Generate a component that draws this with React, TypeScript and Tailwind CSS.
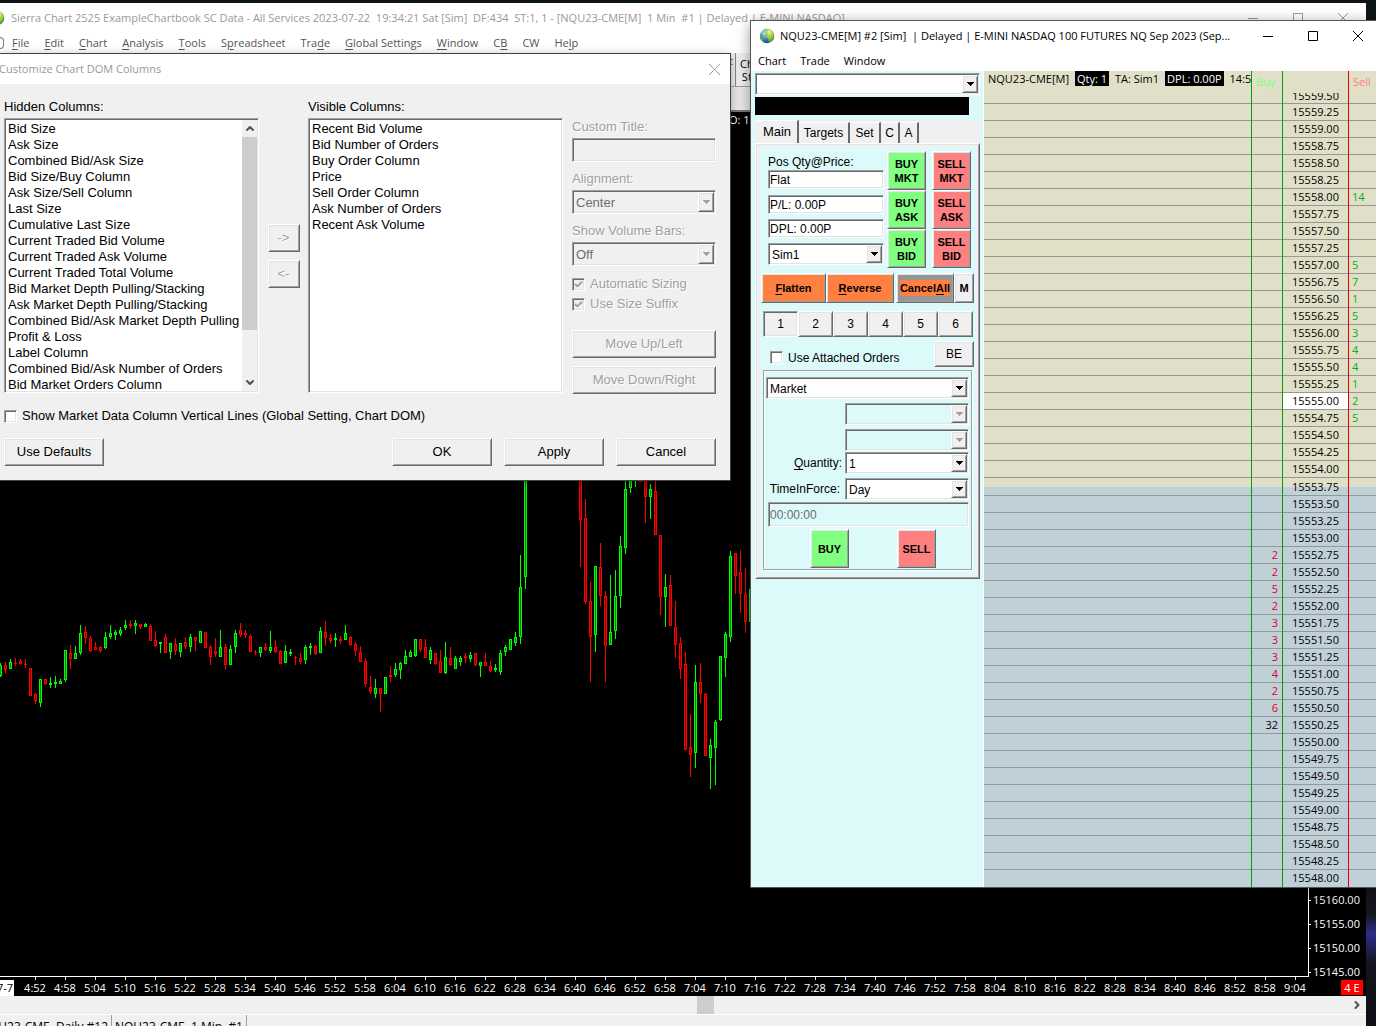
import type { ReactNode } from "react";
import clsx from "clsx";
import { Check, ChevronDown, ChevronRight, ChevronUp } from "lucide-react";

// Classic 3D edges shared by all native-looking controls.
const SUNKEN =
  "border border-t-[#a0a0a0] border-l-[#a0a0a0] border-r-white border-b-white shadow-[inset_1px_1px_0_#696969,inset_-1px_-1px_0_#e3e3e3]";
const RAISED =
  "border border-t-white border-l-white border-r-[#696969] border-b-[#696969] shadow-[inset_1px_1px_0_#e3e3e3,inset_-1px_-1px_0_#a0a0a0]";
const UI_FONT = "font-['Open_Sans','Noto_Sans',sans-serif]";
const FORM_FONT = "font-['Liberation_Sans',Arial,sans-serif]";
const EMBOSSED = "text-[#a0a0a0] [text-shadow:1px_1px_0_#fff]";

const HIDDEN_COLUMNS = [
  "Bid Size",
  "Ask Size",
  "Combined Bid/Ask Size",
  "Bid Size/Buy Column",
  "Ask Size/Sell Column",
  "Last Size",
  "Cumulative Last Size",
  "Current Traded Bid Volume",
  "Current Traded Ask Volume",
  "Current Traded Total Volume",
  "Bid Market Depth Pulling/Stacking",
  "Ask Market Depth Pulling/Stacking",
  "Combined Bid/Ask Market Depth Pulling",
  "Profit & Loss",
  "Label Column",
  "Combined Bid/Ask Number of Orders",
  "Bid Market Orders Column",
];

const VISIBLE_COLUMNS = [
  "Recent Bid Volume",
  "Bid Number of Orders",
  "Buy Order Column",
  "Price",
  "Sell Order Column",
  "Ask Number of Orders",
  "Recent Ask Volume",
];

// slot, high, body top, body bottom, low, 1 = up bar
type Bar = [number, number, number, number, number, 0 | 1];

const BARS: Bar[] = [
  [0, 663, 665, 676, 677, 1], [1, 662, 665, 670, 674, 0], [2, 659, 662, 669, 669, 1],
  [3, 658, 663, 664, 666, 0], [4, 659, 661, 664, 665, 0], [5, 659, 664, 665, 668, 0],
  [6, 668, 668, 696, 696, 0], [7, 693, 694, 701, 704, 0], [8, 679, 679, 703, 707, 1],
  [9, 679, 679, 684, 685, 0], [10, 677, 683, 685, 688, 1], [11, 676, 682, 684, 688, 1],
  [12, 679, 681, 684, 684, 1], [13, 650, 650, 680, 682, 1], [14, 645, 653, 659, 669, 0],
  [15, 646, 653, 659, 659, 1], [16, 625, 633, 653, 655, 1], [17, 626, 632, 638, 644, 0],
  [18, 636, 638, 651, 652, 0], [19, 642, 647, 650, 650, 0], [20, 646, 647, 651, 652, 0],
  [21, 632, 637, 648, 649, 1], [22, 625, 633, 637, 639, 1], [23, 630, 632, 635, 640, 1],
  [24, 627, 630, 634, 636, 1], [25, 620, 625, 628, 630, 1], [26, 620, 624, 626, 629, 0],
  [27, 620, 623, 626, 634, 1], [28, 624, 624, 627, 629, 0], [29, 623, 624, 627, 627, 1],
  [30, 624, 626, 641, 641, 0], [31, 631, 640, 646, 647, 0], [32, 642, 642, 644, 653, 1],
  [33, 634, 637, 653, 653, 0], [34, 643, 643, 652, 659, 1], [35, 638, 644, 651, 655, 0],
  [36, 643, 643, 652, 657, 1], [37, 637, 642, 647, 649, 0], [38, 634, 637, 647, 652, 1],
  [39, 637, 637, 641, 651, 0], [40, 631, 631, 643, 643, 1], [41, 632, 632, 648, 648, 0],
  [42, 645, 647, 657, 665, 0], [43, 638, 651, 654, 657, 0], [44, 630, 647, 657, 657, 1],
  [45, 644, 647, 665, 669, 0], [46, 645, 649, 665, 665, 1], [47, 630, 633, 647, 653, 1],
  [48, 623, 630, 635, 637, 0], [49, 630, 633, 635, 638, 0], [50, 634, 636, 652, 652, 0],
  [51, 650, 652, 653, 655, 0], [52, 647, 647, 653, 657, 1], [53, 643, 647, 650, 651, 0],
  [54, 631, 647, 651, 653, 1], [55, 640, 647, 652, 653, 0], [56, 650, 651, 664, 664, 0],
  [57, 645, 651, 663, 663, 1], [58, 649, 652, 654, 656, 1], [59, 656, 657, 658, 665, 0],
  [60, 653, 658, 662, 664, 0], [61, 645, 647, 660, 664, 1], [62, 643, 646, 648, 655, 1],
  [63, 645, 646, 654, 655, 0], [64, 627, 631, 653, 653, 1], [65, 621, 632, 638, 646, 0],
  [66, 634, 638, 641, 643, 0], [67, 633, 638, 640, 647, 1], [68, 636, 639, 641, 644, 0],
  [69, 625, 633, 640, 640, 1], [70, 636, 637, 645, 646, 0], [71, 642, 644, 651, 656, 0],
  [72, 646, 652, 662, 662, 0], [73, 658, 661, 684, 687, 0], [74, 676, 687, 692, 694, 0],
  [75, 679, 688, 694, 698, 1], [76, 688, 688, 694, 712, 0], [77, 677, 677, 694, 694, 1],
  [78, 666, 675, 677, 682, 0], [79, 663, 669, 675, 677, 1], [80, 662, 663, 670, 679, 1],
  [81, 650, 656, 664, 664, 1], [82, 650, 652, 657, 657, 1], [83, 639, 639, 656, 657, 1],
  [84, 639, 639, 650, 652, 0], [85, 639, 647, 658, 658, 0], [86, 647, 650, 660, 664, 1],
  [87, 653, 653, 664, 665, 0], [88, 650, 661, 673, 673, 0], [89, 642, 657, 673, 674, 1],
  [90, 647, 658, 665, 666, 0], [91, 656, 658, 669, 669, 1], [92, 656, 658, 662, 666, 1],
  [93, 653, 656, 658, 663, 0], [94, 652, 655, 659, 662, 1], [95, 653, 653, 665, 666, 0],
  [96, 662, 662, 666, 677, 1], [97, 653, 662, 666, 666, 0], [98, 661, 666, 671, 672, 0],
  [99, 664, 668, 670, 672, 1], [100, 650, 653, 672, 675, 1], [101, 645, 647, 652, 656, 1],
  [102, 639, 639, 650, 650, 1], [103, 632, 637, 643, 646, 1], [104, 555, 587, 637, 644, 1],
  [105, 440, 450, 577, 589, 1], [116, 440, 450, 520, 567, 0], [117, 499, 518, 602, 604, 0],
  [118, 582, 601, 637, 682, 0], [119, 566, 566, 635, 652, 1], [120, 543, 567, 596, 606, 0],
  [121, 591, 596, 646, 682, 0], [122, 575, 632, 645, 645, 1], [123, 570, 596, 631, 639, 1],
  [124, 536, 546, 596, 608, 1], [125, 470, 489, 548, 554, 1], [126, 460, 470, 488, 493, 1],
  [127, 460, 465, 475, 487, 1], [128, 460, 465, 482, 482, 0], [129, 460, 465, 497, 523, 0],
  [130, 484, 489, 497, 519, 1], [131, 470, 491, 535, 535, 0], [132, 535, 535, 597, 615, 0],
  [133, 574, 587, 597, 627, 1], [134, 575, 585, 626, 626, 0], [135, 601, 627, 645, 658, 0],
  [136, 637, 643, 669, 679, 0], [137, 652, 664, 750, 750, 0], [138, 714, 747, 755, 777, 0],
  [139, 665, 682, 753, 768, 1], [140, 663, 682, 694, 703, 0], [141, 693, 694, 756, 756, 0],
  [142, 739, 745, 758, 789, 1], [143, 720, 722, 748, 785, 1], [144, 656, 656, 720, 721, 1],
  [145, 632, 634, 658, 677, 1], [146, 551, 556, 637, 642, 1], [147, 553, 553, 576, 594, 0],
  [148, 550, 572, 594, 613, 0], [149, 568, 594, 622, 633, 0], [150, 561, 589, 622, 633, 1],
];
const BAR_SPACING = 5;
const CHART_TOP = 112;

// 4:52 to 9:04 in six minute steps
const TIMES = Array.from({ length: 43 }, (_, i) => {
  const m = 4 * 60 + 52 + i * 6;
  return `${Math.floor(m / 60)}:${String(m % 60).padStart(2, "0")}`;
});

const ASKS: Record<string, number> = {
  "15558.00": 14,
  "15557.00": 5,
  "15556.75": 7,
  "15556.50": 1,
  "15556.25": 5,
  "15556.00": 3,
  "15555.75": 4,
  "15555.50": 4,
  "15555.25": 1,
  "15555.00": 2,
  "15554.75": 5,
};
const BIDS: Record<string, number> = {
  "15552.75": 2,
  "15552.50": 2,
  "15552.25": 5,
  "15552.00": 2,
  "15551.75": 3,
  "15551.50": 3,
  "15551.25": 3,
  "15551.00": 4,
  "15550.75": 2,
  "15550.50": 6,
  "15550.25": 32,
};
const PRICES = Array.from({ length: 47 }, (_, i) => (15559.5 - i * 0.25).toFixed(2));
const LAST_PRICE = "15555.00";
const MID_PRICE = "15553.75";

function Globe() {
  return (
    <svg viewBox="0 0 16 16" className="size-4 shrink-0">
      <defs>
        <radialGradient id="sea" cx="35%" cy="30%" r="75%">
          <stop offset="0" stopColor="#b9e3ff" />
          <stop offset="0.5" stopColor="#3f8fd0" />
          <stop offset="1" stopColor="#123f7d" />
        </radialGradient>
        <radialGradient id="land" cx="50%" cy="20%" r="80%">
          <stop offset="0" stopColor="#eef79a" />
          <stop offset="0.5" stopColor="#a2d03c" />
          <stop offset="1" stopColor="#4f9a2c" />
        </radialGradient>
      </defs>
      <circle cx="8" cy="8" r="7.200" fill="url(#sea)" />
      <path d="M6 1.200C9 .2 13 1.800 14.600 5.500 15.800 9 13 13 10.500 14.500 9 13.500 10 11.500 8.500 10 7 9.500 6 8.500 6.800 6.500 7.500 5 6 3.500 6 1.200Z" fill="url(#land)" />
      <path d="M1.500 6C3 5.500 4 7 3.800 9 5 11 5 12.500 4 13.500 1.500 11.500.6 8.500 1.500 6Z" fill="#5fa83a" />
    </svg>
  );
}

// Menu caption with an underlined accelerator letter.
function Accel({ text, at }: { text: string; at: number }) {
  if (at < 0) return <>{text}</>;
  return (
    <>
      {text.slice(0, at)}
      <u className="underline-offset-2">{text[at]}</u>
      {text.slice(at + 1)}
    </>
  );
}

function CaptionButtons({ className }: { className?: string }) {
  const glyphs: [string, string][] = [
    ["Minimize", "M0 5.500H10"],
    ["Maximize", "M.5.5H9.500V9.500H.5Z"],
    ["Close", "M0 0 10 10M10 0 0 10"],
  ];
  return (
    <div className={clsx("ml-auto flex shrink-0 gap-[35px]", className)}>
      {glyphs.map(([name, d]) => (
        <button key={name} type="button" aria-label={name}>
          <svg viewBox="0 0 10 10" className="block size-[10px]">
            <path d={d} fill="none" stroke="currentColor" strokeWidth={1} />
          </svg>
        </button>
      ))}
    </div>
  );
}

function Combo({
  value,
  label,
  id,
  disabled,
  className,
}: {
  value: string;
  label?: string;
  id?: string;
  disabled?: boolean;
  className?: string;
}) {
  return (
    <div className={clsx("relative flex", SUNKEN, className)}>
      <select
        id={id}
        aria-label={label}
        disabled={disabled}
        className="w-full min-w-0 appearance-none bg-transparent pl-[3px] pr-5 pt-px outline-none disabled:text-[#6d6d6d] disabled:opacity-100"
      >
        <option>{value}</option>
      </select>
      <span
        className={clsx(
          "pointer-events-none absolute inset-y-px right-px flex w-4 items-center justify-center bg-[#f0f0f0]",
          RAISED,
        )}
      >
        <svg viewBox="0 0 7 4" className="h-1 w-[7px] shrink-0" shapeRendering="crispEdges">
          <path d="M0 0H7V1H6V2H5V3H4V4H3V3H2V2H1V1H0Z" fill={disabled ? "#a0a0a0" : "#000"} />
        </svg>
      </span>
    </div>
  );
}

function Push({ children, className, disabled }: { children: ReactNode; className?: string; disabled?: boolean }) {
  return (
    <button type="button" disabled={disabled} className={clsx("shrink-0 text-center", RAISED, className)}>
      {children}
    </button>
  );
}

function Tick({ id, checked, disabled }: { id: string; checked?: boolean; disabled?: boolean }) {
  return (
    <span className="relative flex size-[13px] shrink-0">
      <input
        id={id}
        type="checkbox"
        defaultChecked={checked}
        disabled={disabled}
        className={clsx("size-[13px] appearance-none", disabled ? "bg-[#f0f0f0]" : "bg-white", SUNKEN)}
      />
      {checked && (
        <Check className="pointer-events-none absolute top-0.5 left-0.5 size-[9px] text-[#a0a0a0]" strokeWidth={5} />
      )}
    </span>
  );
}

function ListBox({ id, items, scroll }: { id: string; items: string[]; scroll?: boolean }) {
  return (
    <div className={clsx("flex h-[275px] w-[255px] bg-white p-px", SUNKEN)}>
      <select
        id={id}
        size={17}
        className="min-w-0 flex-1 appearance-none overflow-hidden bg-transparent pt-px outline-none [scrollbar-width:none]"
      >
        {items.map((item) => (
          <option key={item} className="h-4 min-h-0 px-0.5 py-0 leading-4 whitespace-nowrap">
            {item}
          </option>
        ))}
      </select>
      {scroll && (
        <div className="flex w-[15px] flex-col items-center bg-[#f0f0f0] text-[#505050]">
          <ChevronUp className="h-[17px] w-3" strokeWidth={4} />
          <span className="h-[193px] w-full bg-[#cdcdcd]" />
          <ChevronDown className="mt-auto h-[17px] w-3" strokeWidth={4} />
        </div>
      )}
    </div>
  );
}

function ColumnsDialog() {
  return (
    <section
      className={clsx(
        "absolute top-[54px] left-0 flex w-[730px] flex-col bg-[#f0f0f0] text-[13px] leading-4 shadow-[0_0_0_1px_#444,0_2px_10px_rgba(0,0,0,0.4)]",
        FORM_FONT,
      )}
    >
      <header className={clsx("flex h-[30px] items-center justify-between bg-white pr-[10px] text-[11px] text-[#999]", UI_FONT)}>
        <h2 className="-ml-px">Customize Chart DOM Columns</h2>
        <button type="button" aria-label="Close">
          <svg viewBox="0 0 11 11" className="block size-[11px]">
            <path d="M0 0 11 11M11 0 0 11" fill="none" stroke="currentColor" strokeWidth={1} />
          </svg>
        </button>
      </header>

      <div className="flex pt-[15px] pr-[14px] pb-[14px] pl-1">
        <div className="flex flex-col gap-[3px]">
          <label htmlFor="hidden-columns">Hidden Columns:</label>
          <ListBox id="hidden-columns" items={HIDDEN_COLUMNS} scroll />
        </div>
        <div className="flex w-[49px] flex-col items-center gap-2 pt-[125px]">
          <Push disabled className={clsx("h-7 w-8", EMBOSSED)}>-&gt;</Push>
          <Push disabled className={clsx("h-7 w-8", EMBOSSED)}>&lt;-</Push>
        </div>
        <div className="flex flex-col gap-[3px]">
          <label htmlFor="visible-columns">Visible Columns:</label>
          <ListBox id="visible-columns" items={VISIBLE_COLUMNS} />
        </div>

        <div className="ml-auto flex w-36 flex-col pt-5">
          <label htmlFor="custom-title" className={EMBOSSED}>Custom Title:</label>
          <input id="custom-title" disabled className={clsx("mt-[3px] h-6 w-full px-1", SUNKEN)} />
          <label htmlFor="alignment" className={clsx("mt-[9px]", EMBOSSED)}>Alignment:</label>
          <Combo id="alignment" value="Center" disabled className="mt-[3px] h-6" />
          <label htmlFor="volume-bars" className={clsx("mt-[9px]", EMBOSSED)}>Show Volume Bars:</label>
          <Combo id="volume-bars" value="Off" disabled className="mt-[3px] h-6" />
          <div className="mt-2 flex h-5 items-center gap-[5px]">
            <Tick id="auto-sizing" checked disabled />
            <label htmlFor="auto-sizing" className={EMBOSSED}>Automatic Sizing</label>
          </div>
          <div className="flex h-5 items-center gap-[5px]">
            <Tick id="size-suffix" checked disabled />
            <label htmlFor="size-suffix" className={EMBOSSED}>Use Size Suffix</label>
          </div>
          <Push disabled className={clsx("mt-4 h-7", EMBOSSED)}>Move Up/Left</Push>
          <Push disabled className={clsx("mt-2 h-7", EMBOSSED)}>Move Down/Right</Push>
        </div>
      </div>

      <div className="flex items-center gap-[5px] pl-1">
        <Tick id="vertical-lines" />
        <label htmlFor="vertical-lines">Show Market Data Column Vertical Lines (Global Setting, Chart DOM)</label>
      </div>
      <footer className="flex gap-3 p-[14px] pl-1">
        <Push className="mr-auto h-7 w-[100px]">Use Defaults</Push>
        <Push className="h-7 w-[100px]">OK</Push>
        <Push className="h-7 w-[100px]">Apply</Push>
        <Push className="h-7 w-[100px]">Cancel</Push>
      </footer>
    </section>
  );
}

const MAIN_MENU: [string, number][] = [
  ["File", 0],
  ["Edit", 0],
  ["Chart", 0],
  ["Analysis", 0],
  ["Tools", 0],
  ["Spreadsheet", 1],
  ["Trade", 3],
  ["Global Settings", 0],
  ["Window", 0],
  ["CB", 1],
  ["CW", -1],
  ["Help", 2],
];

function MainWindow() {
  return (
    <main className={clsx("absolute top-[3px] right-[10px] bottom-0 left-0 flex flex-col overflow-hidden bg-[#f0f0f0] text-[11px] leading-4", UI_FONT)}>
      <header className="flex h-[30px] shrink-0 items-center overflow-hidden bg-white text-[#999]">
        <span className="-ml-[11px] mr-1.5">
          <Globe />
        </span>
        <h1 className="whitespace-pre">
          Sierra Chart 2525 ExampleChartbook SC Data - All Services 2023-07-22  19:34:21 Sat [Sim]  DF:434  ST:1, 1 - [NQU23-CME[M]  1 Min  #1 | Delayed | E-MINI NASDAQ]
        </h1>
        <CaptionButtons className="pr-[18px]" />
      </header>
      <nav className="flex h-5 shrink-0 items-center gap-[15px] bg-white text-[#555]">
        <span className="-mr-[7px] h-3 w-1 rounded-r-sm border border-l-0 border-[#777]" />
        {MAIN_MENU.map(([text, at]) => (
          <a key={text} href="#" className="whitespace-nowrap">
            <Accel text={text} at={at} />
          </a>
        ))}
      </nav>
      <div className="flex h-[34px] shrink-0 border-b border-[#a0a0a0]">
        <span className="w-[736px] border-r border-[#888] pr-0.5 text-right text-[#27638c]">t</span>
        <span className="pt-1 pl-1 text-center leading-[13px]">Ch<br />St</span>
      </div>
      <div className="h-[25px] shrink-0 border-b-2 border-[#777] bg-[#eaeaea]" />

      <div className="flex min-h-0 flex-1 bg-black">
        <div className="relative flex-1 border-b border-white">
          <span className="absolute top-0 left-[729px] text-white">O: 15</span>
          <svg width="751" height="100%" shapeRendering="crispEdges" className="block">
            <g transform={`translate(0 -${CHART_TOP})`}>
              {BARS.map(([slot, high, top, bottom, low, up]) => {
                const x = slot * BAR_SPACING;
                const edge = up ? "#00ff00" : "#ff0000";
                return (
                  <g key={slot}>
                    <rect x={x} y={high} width={1} height={low - high} fill={edge} />
                    <rect x={x - 1} y={top} width={3} height={bottom - top} fill={edge} />
                    {bottom - top > 2 && (
                      <rect x={x} y={top + 1} width={1} height={bottom - top - 2} fill={up ? "#007f00" : "#7f0000"} />
                    )}
                  </g>
                );
              })}
            </g>
          </svg>
        </div>
        <div className="flex w-[58px] flex-col justify-end overflow-hidden border-l border-white text-white">
          {["15160.00", "15155.00", "15150.00", "15145.00"].map((p) => (
            <div key={p} className="flex h-6 shrink-0 items-center gap-[2px] last:-mb-[7px]">
              <span className="h-px w-0.5 bg-white" />
              {p}
            </div>
          ))}
        </div>
      </div>

      <div className="flex h-[19px] shrink-0 items-start bg-black text-white">
        <span className="mt-[3px] -mr-0.5 flex h-4 w-[14px] shrink-0 items-center justify-end overflow-hidden bg-white pr-px whitespace-nowrap text-black">7-7</span>
        <div className="flex pl-2">
          {TIMES.map((t) => (
            <div key={t} className="flex w-[30px] shrink-0 flex-col">
              <span className="ml-[15px] h-[3px] w-px bg-white" />
              <span className="text-center">{t}</span>
            </div>
          ))}
        </div>
        <span className="mt-[3px] mr-[3px] ml-auto h-[15px] w-[22px] bg-[#f00] text-center leading-[15px]">4 E</span>
      </div>
      <div className="flex h-[18px] shrink-0 items-center justify-end">
        <span className="mr-[637px] h-full w-[17px] bg-[#cdcdcd]" />
        <ChevronRight className="mr-[3px] size-3 text-[#505050]" strokeWidth={4} />
      </div>
      <div className="flex h-3 shrink-0 overflow-hidden border-t border-white">
        <a href="#" className="flex h-6 w-28 shrink-0 items-center justify-end overflow-hidden border-r border-[#a0a0a0] pr-[3px] text-[12px] whitespace-pre">NQU23-CME  Daily #12</a>
        <a href="#" className="flex h-6 shrink-0 items-center border-r border-[#a0a0a0] px-[3px] text-[12px] whitespace-pre">NQU23-CME  1 Min  #1</a>
      </div>
    </main>
  );
}

function OrderButton({ lines, side }: { lines: string[]; side: "buy" | "sell" }) {
  return (
    <Push className={clsx("h-[39px] w-[39px] text-[11px] leading-[14px] font-bold", side === "buy" ? "bg-[#80ff80]" : "bg-[#ff8080]")}>
      {lines.map((l) => (
        <span key={l} className="block">{l}</span>
      ))}
    </Push>
  );
}

const TABS = [
  { label: "Targets", width: "w-[51px]" },
  { label: "Set", width: "w-[31px]" },
  { label: "C", width: "w-[19px]" },
  { label: "A", width: "w-[19px]" },
];

function TradePanel() {
  return (
    <div className={clsx("flex w-[233px] shrink-0 flex-col border-r border-white bg-[#dcfafa] pt-0.5 pr-[3px] pl-1 text-[12px] leading-4", FORM_FONT)}>
      <Combo label="Message" value="" className="h-[22px] bg-white" />
      <div className="mt-0.5 h-[18px] w-[214px] bg-black" />

      <div className="mt-[5px] flex h-[23px] items-end bg-[#f0f0f0] pl-0.5">
        <button type="button" className="h-[23px] w-[42px] border-t border-r-2 border-t-white border-r-[#696969] pb-px text-[13px]">Main</button>
        {TABS.map((t) => (
          <button key={t.label} type="button" className={clsx("h-[21px] border-t border-r-2 border-t-white border-r-[#696969]", t.width)}>
            {t.label}
          </button>
        ))}
      </div>

      <div className={clsx("bg-[#f0f0f0] p-[3px] pl-1", RAISED)}>
        <div className="flex flex-col bg-[#dcfafa] pb-[5px]">
          <div className="flex gap-[6px] pt-1 pr-[2px] pl-2">
            <div className="flex w-[116px] flex-col">
              <label htmlFor="pos" className="mt-[3px]">Pos Qty@Price:</label>
              <input id="pos" readOnly value="Flat" className={clsx("h-[19px] bg-white px-px", SUNKEN)} />
              <input aria-label="P/L" readOnly value="P/L: 0.00P" className={clsx("mt-1.5 h-[19px] bg-white px-px", SUNKEN)} />
              <input aria-label="Daily P/L" readOnly value="DPL: 0.00P" className={clsx("mt-[5px] h-[19px] bg-white px-px", SUNKEN)} />
              <Combo label="Account" value="Sim1" className="mt-[5px] h-[22px] bg-white" />
            </div>
            <div className="-ml-[3px] flex flex-col">
              <OrderButton side="buy" lines={["BUY", "MKT"]} />
              <OrderButton side="buy" lines={["BUY", "ASK"]} />
              <OrderButton side="buy" lines={["BUY", "BID"]} />
            </div>
            <div className="flex flex-col">
              <OrderButton side="sell" lines={["SELL", "MKT"]} />
              <OrderButton side="sell" lines={["SELL", "ASK"]} />
              <OrderButton side="sell" lines={["SELL", "BID"]} />
            </div>
          </div>

          <div className="mt-[5px] flex pl-px text-[11px] font-bold">
            <Push className="h-[30px] w-[65px] bg-[#ff8040]"><Accel text="Flatten" at={0} /></Push>
            <Push className="h-[30px] w-[68px] bg-[#ff8040]"><Accel text="Reverse" at={0} /></Push>
            <Push className="ml-0.5 flex h-[30px] w-[58px] items-center justify-center bg-[#969696]">
              <span className="bg-[#ff8040]"><Accel text="CancelAll" at={6} /></span>
            </Push>
            <Push className="h-[30px] w-5 bg-[#f0f0f0]">M</Push>
          </div>

          <div className="mt-2 flex pl-[3px]">
            <button type="button" className={clsx("h-[26px] w-[35px] bg-[#f0f0f0]", SUNKEN)}>1</button>
            {[2, 3, 4, 5, 6].map((n) => (
              <Push key={n} className="h-[26px] w-[35px] bg-[#f0f0f0]">{n}</Push>
            ))}
          </div>

          <div className="mt-1 flex h-[26px] items-end gap-[5px] pr-0.5 pl-[10px]">
            <span className="flex h-[18px] items-center pb-0.5"><Tick id="attached" /></span>
            <label htmlFor="attached" className="pb-px">Use Attached Orders</label>
            <Push className="ml-auto h-[26px] w-10 bg-[#f0f0f0]">BE</Push>
          </div>

          <div className="mt-[3px] mr-1 ml-[3px] flex h-[200px] flex-col border border-[#a0a0a0] px-0.5 pt-1.5 shadow-[inset_1px_1px_0_#fff,1px_1px_0_#fff]">
            <Combo label="Order type" value="Market" className="h-[22px] bg-white" />
            <Combo label="Price 1" value="" disabled className="mt-1 ml-[79px] h-[22px]" />
            <Combo label="Price 2" value="" disabled className="mt-1 ml-[79px] h-[22px]" />
            <div className="mt-px flex items-center">
              <label htmlFor="quantity" className="w-[79px] pr-[3px] text-right"><Accel text="Quantity:" at={0} /></label>
              <Combo id="quantity" value="1" className="h-[22px] flex-1 bg-white" />
            </div>
            <div className="mt-1 flex items-center">
              <label htmlFor="tif" className="w-[79px] pr-[5px] text-right">TimeInForce:</label>
              <Combo id="tif" value="Day" className="h-[22px] flex-1 bg-white" />
            </div>
            <input aria-label="Time" readOnly disabled value="00:00:00" className={clsx("mt-0.5 ml-0.5 h-[25px] bg-transparent px-px text-[#6d6d6d]", SUNKEN)} />
            <div className="mt-0.5 flex gap-12 pl-11">
              <OrderButton side="buy" lines={["BUY"]} />
              <OrderButton side="sell" lines={["SELL"]} />
            </div>
          </div>
        </div>
      </div>
    </div>
  );
}

function rowColor(price: string): string {
  if (price === MID_PRICE) return "bg-[linear-gradient(#e0e0c8_50%,#c0d0d8_50%)]";
  return Number(price) > Number(MID_PRICE) ? "bg-[#e0e0c8]" : "bg-[#c0d0d8]";
}

function PriceLadder() {
  return (
    <div className="min-w-0 flex-1 overflow-hidden">
      <table className="w-full table-fixed border-separate border-spacing-0 text-[11px] leading-4">
        <thead>
          <tr className="h-[22px] bg-[#e0e0c8] text-left align-top whitespace-nowrap [&>th]:p-0 [&>th]:font-normal">
            <th>
              <div className="flex gap-1.5 overflow-hidden pl-1">
                <span>NQU23-CME[M]</span>
                <span className="h-[15px] bg-black px-0.5 leading-[15px] text-white">Qty: 1</span>
                <span>TA: Sim1</span>
                <span className="h-[15px] bg-black px-0.5 leading-[15px] text-white">DPL: 0.00P</span>
                <span>14:5</span>
              </div>
            </th>
            <th className="w-[31px] border-l border-[#00a000]"><span className="block pt-[3px] pl-1 text-[#80ff80]">Buy</span></th>
            <th className="w-[66px] border-l border-[#00a000]" />
            <th className="w-7 border-l border-[#e00000]"><span className="block pt-[3px] pl-1 text-[#ff8080]">Sell</span></th>
          </tr>
        </thead>
        <tbody className="[&_td]:p-0">
          {PRICES.map((price, i) => {
            const line = i < PRICES.length - 1 && "shadow-[inset_0_-1px_0_#979797]";
            const height = i === 0 ? "h-[11px]" : price === MID_PRICE ? "h-[18px]" : "h-[17px]";
            return (
              <tr key={price} className={rowColor(price)}>
                <td className={clsx(height, line)} />
                <td className={clsx("border-l border-[#00a000]", line)}>
                  <span className={clsx("block h-[17px] overflow-hidden pr-1 text-right", BIDS[price] > 9 ? "text-black" : "text-[#e00020]", i === 0 && "hidden")}>
                    {BIDS[price]}
                  </span>
                </td>
                <td className={clsx("border-l border-[#00a000]", line, price === LAST_PRICE && "bg-white")}>
                  <div className={clsx("flex justify-center overflow-hidden", i === 0 ? "h-[11px] items-end" : "h-[17px] items-start")}>
                    <span>{price}</span>
                  </div>
                </td>
                <td className={clsx("border-l border-[#e00000]", line)}>
                  <span className={clsx("block h-[17px] pl-[3px] text-[#00b020]", i === 0 && "hidden")}>{ASKS[price]}</span>
                </td>
              </tr>
            );
          })}
        </tbody>
      </table>
    </div>
  );
}

function DomWindow() {
  return (
    <section className={clsx("absolute top-[21px] right-0 left-[751px] flex flex-col bg-[#f0f0f0] text-[11px] leading-4 shadow-[0_0_0_1px_#555,0_3px_14px_rgba(0,0,0,0.45)]", UI_FONT)}>
      <header className="flex h-[30px] items-center bg-white pl-2">
        <Globe />
        <h2 className="ml-[5px] truncate whitespace-pre">
          NQU23-CME[M] #2 [Sim]  | Delayed | E-MINI NASDAQ 100 FUTURES NQ Sep 2023 (Sep...
        </h2>
        <CaptionButtons className="pr-[13px]" />
      </header>
      <nav className="flex h-5 items-center gap-[14px] bg-white pl-[7px]">
        <a href="#">Chart</a>
        <a href="#">Trade</a>
        <a href="#">Window</a>
      </nav>
      <div className="flex">
        <TradePanel />
        <PriceLadder />
      </div>
    </section>
  );
}

export default function App() {
  return (
    <div className="relative h-screen min-h-[900px] overflow-hidden bg-[linear-gradient(#0c1418_0,#15151b_89%,#2c2f8a_91%,#14121c_94%,#100e14_100%)] text-black">
      <MainWindow />
      <ColumnsDialog />
      <DomWindow />
    </div>
  );
}
